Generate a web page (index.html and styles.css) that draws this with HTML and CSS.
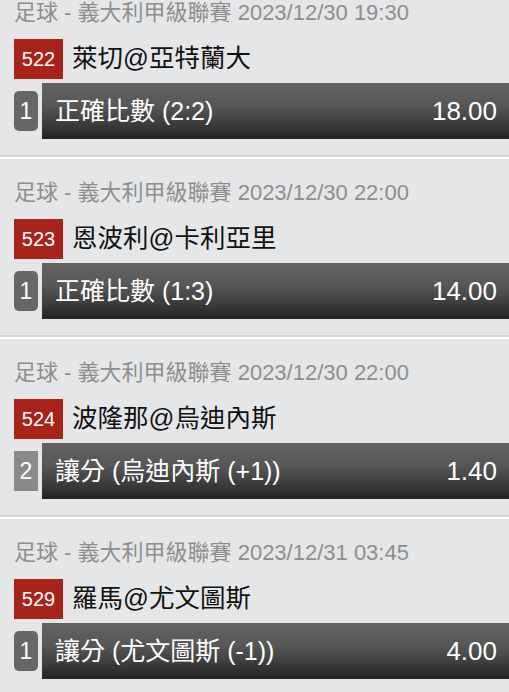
FILE: index.html
```html
<!DOCTYPE html>
<html lang="zh-Hant">
<head>
  <meta charset="UTF-8">
  <meta name="viewport" content="width=device-width, initial-scale=1.0">
  <title>投注單</title>
  <link rel="stylesheet" href="styles.css">
</head>
<body>
  <div class="slip">
    <div class="bet">
      <div class="bet-info">足球 - 義大利甲級聯賽 2023/12/30 19:30</div>
      <div class="match">
        <span class="match-no">522</span>
        <span class="match-name">萊切@亞特蘭大</span>
      </div>
      <div class="pick">
        <span class="pick-no">1</span>
        <div class="pick-bar">
          <span class="pick-name">正確比數 (2:2)</span>
          <span class="odds">18.00</span>
        </div>
      </div>
    </div>

    <div class="bet">
      <div class="bet-info">足球 - 義大利甲級聯賽 2023/12/30 22:00</div>
      <div class="match">
        <span class="match-no">523</span>
        <span class="match-name">恩波利@卡利亞里</span>
      </div>
      <div class="pick">
        <span class="pick-no">1</span>
        <div class="pick-bar">
          <span class="pick-name">正確比數 (1:3)</span>
          <span class="odds">14.00</span>
        </div>
      </div>
    </div>

    <div class="bet">
      <div class="bet-info">足球 - 義大利甲級聯賽 2023/12/30 22:00</div>
      <div class="match">
        <span class="match-no">524</span>
        <span class="match-name">波隆那@烏迪內斯</span>
      </div>
      <div class="pick">
        <span class="pick-no square">2</span>
        <div class="pick-bar">
          <span class="pick-name">讓分 (烏迪內斯 (+1))</span>
          <span class="odds">1.40</span>
        </div>
      </div>
    </div>

    <div class="bet">
      <div class="bet-info">足球 - 義大利甲級聯賽 2023/12/31 03:45</div>
      <div class="match">
        <span class="match-no">529</span>
        <span class="match-name">羅馬@尤文圖斯</span>
      </div>
      <div class="pick">
        <span class="pick-no">1</span>
        <div class="pick-bar">
          <span class="pick-name">讓分 (尤文圖斯 (-1))</span>
          <span class="odds">4.00</span>
        </div>
      </div>
    </div>
  </div>
</body>
</html>
```

FILE: styles.css
```css
body {
  font-family: "Liberation Sans", "Noto Sans CJK TC", sans-serif;
  background-color: #e5e6e8;
  margin: 0;
  overflow: hidden;
}

.slip {
  margin-top: -21px;
}

.bet {
  padding: 20px 0 16px 14px;
  border-bottom: 2px solid #d3d4d6;
  box-shadow: 0 2px 0 #fff;
  margin-bottom: 2px;
}

.bet-info {
  color: #8e8e8e;
  font-size: 22px;
  line-height: 28px;
  white-space: nowrap;
  padding-bottom: 3px;
  margin-bottom: -3px;
}

.match {
  display: flex;
  align-items: center;
  gap: 9px;
  margin-top: 12px;
  height: 40px;
}

.match-no {
  background-color: #a8231a;
  color: #fff;
  width: 49px;
  height: 40px;
  display: flex;
  justify-content: center;
  align-items: center;
  font-size: 20px;
}

.match-name {
  color: #111;
  font-size: 25.5px;
  padding-bottom: 8px;
}

.pick {
  display: flex;
  align-items: center;
  gap: 4px;
  margin-top: 4px;
}

.pick-no {
  background-color: #666;
  color: #fff;
  width: 24px;
  height: 40px;
  border-radius: 5px;
  display: flex;
  justify-content: center;
  align-items: center;
  font-size: 23px;
}

.pick-no.square {
  background-color: #8a8a8a;
  border-radius: 0;
}

.pick-bar {
  flex: 1;
  height: 56px;
  display: flex;
  justify-content: space-between;
  align-items: center;
  padding: 0 12px 0 13px;
  color: #fff;
  background: linear-gradient(#636363, #575757 40%, #3a3a3a 75%, #232323);
}

.pick-name {
  font-size: 25px;
  padding-bottom: 4px;
}

.odds {
  font-size: 26px;
}
```
